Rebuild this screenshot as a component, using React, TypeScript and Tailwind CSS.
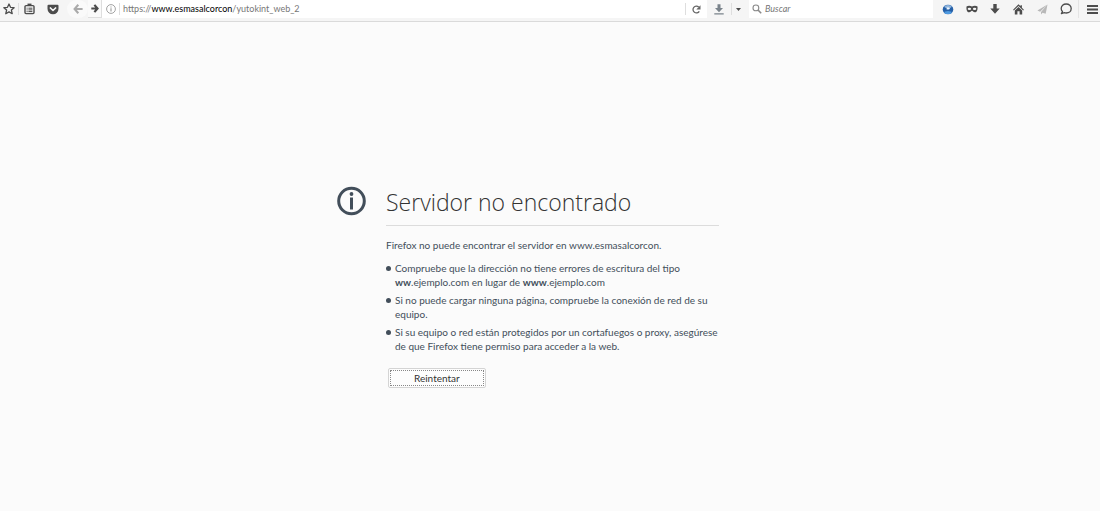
import type { ReactNode } from 'react';
import clsx from 'clsx';

const HOST = 'www.esmasalcorcon';
const PATH = '/yutokint_web_2';

type ToolButtonProps = {
  label: string;
  className?: string;
  children: ReactNode;
};

const ToolButton = ({ label, className, children }: ToolButtonProps) => (
  <button
    type="button"
    aria-label={label}
    title={label}
    className={clsx('flex h-[18px] shrink-0 items-center justify-center', className)}
  >
    {children}
  </button>
);

const Separator = () => <span className="mt-[3px] h-3 w-px shrink-0 self-start bg-[#dedede]" />;

const StarIcon = () => (
  <svg width="12" height="12" viewBox="0 0 12 12" fill="none" stroke="currentColor" strokeWidth="1.3" strokeLinejoin="round">
    <path d="M6 1l1.5 3.3 3.6.4-2.7 2.4.8 3.6L6 8.9l-3.2 1.8.8-3.6L.9 4.7l3.6-.4z" />
  </svg>
);

const ClipboardIcon = () => (
  <svg width="11" height="12" viewBox="0 0 11 12" fill="none" stroke="currentColor">
    <rect x="1" y="2.6" width="9" height="8" rx="1" strokeWidth="1.4" />
    <path d="M3.5 1.6h4" strokeWidth="2" />
    <path d="M2.6 5.2h1M4.4 5.2h4M2.6 6.9h1M4.4 6.9h4M2.6 8.6h1M4.4 8.6h4" strokeWidth="1" />
  </svg>
);

const PocketIcon = () => (
  <svg width="12" height="11" viewBox="0 0 12 11">
    <path d="M1.5.8h9a1 1 0 0 1 1 1v3a5.5 5.5 0 0 1-11 0v-3a1 1 0 0 1 1-1z" fill="currentColor" />
    <path d="M3.3 3.9L6 6.5l2.7-2.6" fill="none" stroke="#f6f6f6" strokeWidth="1.5" strokeLinecap="round" strokeLinejoin="round" />
  </svg>
);

const BackIcon = () => (
  <svg width="10" height="10" viewBox="0 0 10 10" fill="none" stroke="currentColor" strokeWidth="2.1">
    <path d="M5.3.8L1.6 5l3.7 4.2M2 5h7.6" />
  </svg>
);

const ForwardIcon = () => (
  <svg width="8" height="9" viewBox="0 0 8 9" fill="none" stroke="currentColor" strokeWidth="2.2">
    <path d="M3.4.9L6.5 4.5 3.4 8.1M.3 4.5h6" />
  </svg>
);

const SiteInfoIcon = () => (
  <svg width="10" height="10" viewBox="0 0 10 10" fill="none" stroke="currentColor">
    <circle cx="5" cy="5" r="4.4" strokeWidth=".9" />
    <path d="M5 4.3v3.2M5 2.4v1.1" strokeWidth="1.1" />
  </svg>
);

const ReloadIcon = () => (
  <svg width="9" height="9" viewBox="0 0 9 9">
    <path d="M7.3 6.3A3.4 3.4 0 1 1 6.7 2" fill="none" stroke="currentColor" strokeWidth="1.3" />
    <path d="M8.5.3v4.3H4.3z" fill="currentColor" />
  </svg>
);

const DownloadsIcon = () => (
  <svg width="10" height="11" viewBox="0 0 10 11" fill="currentColor">
    <path d="M3.5.3h3v3.7H9L5 8.2 1 4h2.5zM.3 9.3h9.4v1.2H.3z" />
  </svg>
);

const SearchIcon = () => (
  <svg className="shrink-0" width="10" height="10" viewBox="0 0 10 10" fill="none" stroke="currentColor">
    <circle cx="3.9" cy="3.9" r="2.9" strokeWidth="1.1" />
    <path d="M6 6l3.2 3.2" strokeWidth="1.6" />
  </svg>
);

const GlobeIcon = () => (
  <svg width="12" height="11" viewBox="0 0 12 11">
    <ellipse cx="6" cy="5.5" rx="5.3" ry="4.8" fill="#2560a8" />
    <ellipse cx="6" cy="8.4" rx="3.6" ry="1.5" fill="#4f9ae0" />
    <ellipse cx="6" cy="2.4" rx="3.6" ry="1.5" fill="#8fb4dc" />
    <path d="M4.6 3.4H7l1 1-1 1.200H4.600z" fill="#eef5fc" />
  </svg>
);

const MaskIcon = () => (
  <svg width="12" height="8" viewBox="0 0 12 8">
    <path d="M.5 1.4C2 .4 4.6.5 6 1.5c1.4-1 4-1.1 5.5-.1.3 3-.4 5.9-2.7 5.9C7.3 7.3 6.8 5.8 6 5.8s-1.3 1.5-2.8 1.5C.9 7.3.2 4.4.5 1.4z" fill="currentColor" />
    <ellipse cx="3.4" cy="3.9" rx="1.7" ry="1.1" fill="#f6f6f6" />
    <ellipse cx="8.6" cy="3.9" rx="1.7" ry="1.1" fill="#f6f6f6" />
  </svg>
);

const ArrowDownIcon = () => (
  <svg width="10" height="10" viewBox="0 0 10 10" fill="currentColor">
    <path d="M3.3 0h3.4v4.4h3L5 9.7.3 4.4h3z" />
  </svg>
);

const HomeIcon = () => (
  <svg width="11" height="11" viewBox="0 0 11 11" fill="currentColor">
    <path d="M5.5.3l2 2V1.2h1.4v2.5l2 2-.7.8L5.5 2 .8 6.5l-.7-.8z" />
    <path d="M5.5 3l3.7 3.6v3.8H6.6V7.3H4.4v3.1H1.8V6.6z" />
  </svg>
);

const SendIcon = () => (
  <svg width="11" height="11" viewBox="0 0 11 11" fill="currentColor">
    <path d="M10.5.4L.4 6.4l2.7 1.3zM10.5.4L4 8v2.6l1.5-1.9 3.2 1.1z" />
  </svg>
);

const ChatIcon = () => (
  <svg width="12" height="12" viewBox="0 0 12 12" fill="none" stroke="currentColor" strokeWidth="1.3">
    <path d="M6.2 1C3.3 1 1.2 2.9 1.2 5.4c0 1.3.5 2.3 1.3 3.1L1.4 10.600l2.900-.9c.6.2 1.2.3 1.9.3 2.9 0 5-1.9 5-4.5S9.1 1 6.2 1z" strokeLinejoin="round" />
  </svg>
);

const MenuIcon = () => (
  <svg width="11" height="9" viewBox="0 0 11 9" fill="currentColor">
    <path d="M0 0h11v2H0zM0 3.5h11v2H0zM0 7h11v2H0z" />
  </svg>
);

const AddressBar = () => (
  <div className="flex h-[18px] min-w-0 flex-1 items-center bg-white">
    <ToolButton label="Adelante" className="w-[14px] border-r border-b border-[#dedede] bg-[#fafafa]">
      <ForwardIcon />
    </ToolButton>
    <ToolButton label="Información del sitio" className="w-[17px] text-[#999]">
      <SiteInfoIcon />
    </ToolButton>
    <Separator />
    <div className="grid min-w-0 flex-1 items-center pl-[3px] text-[9px] leading-4">
      <input
        type="text"
        aria-label="Dirección"
        defaultValue={`https://${HOST}${PATH}`}
        className="peer col-start-1 row-start-1 w-full bg-transparent text-transparent outline-none focus:text-[#222]"
      />
      {/* host is darker than the rest until the field is being edited */}
      <span aria-hidden="true" className="pointer-events-none col-start-1 row-start-1 truncate text-[#777] peer-focus:hidden">
        https://<span className="text-black">{HOST}</span>{PATH}
      </span>
    </div>
    <Separator />
    <ToolButton label="Recargar" className="w-[21px] text-[#666]">
      <ReloadIcon />
    </ToolButton>
  </div>
);

const Toolbar = () => (
  <header className="flex h-[22px] items-start border-b border-[#dadada] bg-[#f5f5f5] text-[#4c4c4c]">
    <ToolButton label="Marcar esta página" className="w-[18px]"><StarIcon /></ToolButton>
    <Separator />
    <ToolButton label="Marcadores" className="w-5"><ClipboardIcon /></ToolButton>
    <ToolButton label="Guardar en Pocket" className="w-7"><PocketIcon /></ToolButton>
    <ToolButton label="Atrás" className="w-[21px] rounded-full bg-[#fafafa] text-[#aaa]"><BackIcon /></ToolButton>
    <AddressBar />
    <ToolButton label="Descargas" className="w-6 text-[#7a838b]"><DownloadsIcon /></ToolButton>
    <Separator />
    <ToolButton label="Más descargas" className="w-[17px] pr-1">
      <svg width="5" height="3" viewBox="0 0 5 3" fill="currentColor"><path d="M0 0h5L2.5 3z" /></svg>
    </ToolButton>
    <label className="flex h-[18px] w-[184px] shrink-0 items-center gap-[3px] bg-white pl-[3px] text-[#8a8a8a]">
      <SearchIcon />
      <input
        type="search"
        aria-label="Buscar"
        placeholder="Buscar"
        className="min-w-0 flex-1 bg-transparent text-[9px] leading-4 italic outline-none placeholder:text-[#777]"
      />
    </label>
    <nav aria-label="Complementos" className="flex shrink-0 pl-[3px]">
      <ToolButton label="Globo" className="w-6"><GlobeIcon /></ToolButton>
      <ToolButton label="Máscara" className="w-[23px]"><MaskIcon /></ToolButton>
      <ToolButton label="Descargar" className="w-6"><ArrowDownIcon /></ToolButton>
      <ToolButton label="Inicio" className="w-[23px]"><HomeIcon /></ToolButton>
      <ToolButton label="Compartir" className="w-6 text-[#b8b8b8]"><SendIcon /></ToolButton>
      <ToolButton label="Chat" className="w-6"><ChatIcon /></ToolButton>
    </nav>
    <span className="h-[18px] w-px shrink-0 bg-[#e4e4e4]" />
    <ToolButton label="Abrir menú" className="w-[21px] pl-[5px]"><MenuIcon /></ToolButton>
  </header>
);

const Tip = ({ children }: { children: ReactNode }) => (
  <li className="flex">
    <span className="mt-[5px] mr-1 size-[5px] shrink-0 rounded-full bg-[#424e5a]" />
    <p>{children}</p>
  </li>
);

const ErrorPage = () => (
  <main className="mx-auto flex max-w-[426px] items-start pt-[164px]">
    <svg className="mr-5 shrink-0" width="29" height="30" viewBox="0 0 29 30">
      <circle cx="14.5" cy="15" r="12.8" fill="none" stroke="#424e5a" strokeWidth="3" />
      <circle cx="14.5" cy="8" r="1.9" fill="#424e5a" />
      <path d="M13 11.500h3v12h-3z" fill="#424e5a" />
    </svg>
    <div className="mr-11 min-w-0 flex-1 text-[10px] leading-[14px] text-[#424e5a]">
      <h1 className="border-b border-[#dcdcdc] pb-[7px] font-['Open_Sans','Noto_Sans',sans-serif] text-[23px] leading-8 font-light text-[#333]">
        Servidor no encontrado
      </h1>
      <p className="mt-3">Firefox no puede encontrar el servidor en {HOST}.</p>
      <ul className="mt-[9px] space-y-1">
        <Tip>
          Compruebe que la dirección no tiene errores de escritura del tipo <b>ww</b>.ejemplo.com en lugar de <b>www</b>.ejemplo.com
        </Tip>
        <Tip>Si no puede cargar ninguna página, compruebe la conexión de red de su equipo.</Tip>
        <Tip>
          Si su equipo o red están protegidos por un cortafuegos o proxy, asegúrese de que Firefox tiene permiso para acceder a la web.
        </Tip>
      </ul>
      <button type="button" className="mt-[15px] ml-0.5 rounded-xs border border-[#d4d4d4] bg-[#fdfdfd] p-px text-[#333]">
        <span className="block border border-dotted border-[#888] px-[23px] leading-[14px]">Reintentar</span>
      </button>
    </div>
  </main>
);

export default function App() {
  return (
    <div className="min-h-screen bg-[#fbfbfb] font-['Lato','Open_Sans',sans-serif]">
      <Toolbar />
      <ErrorPage />
    </div>
  );
}
